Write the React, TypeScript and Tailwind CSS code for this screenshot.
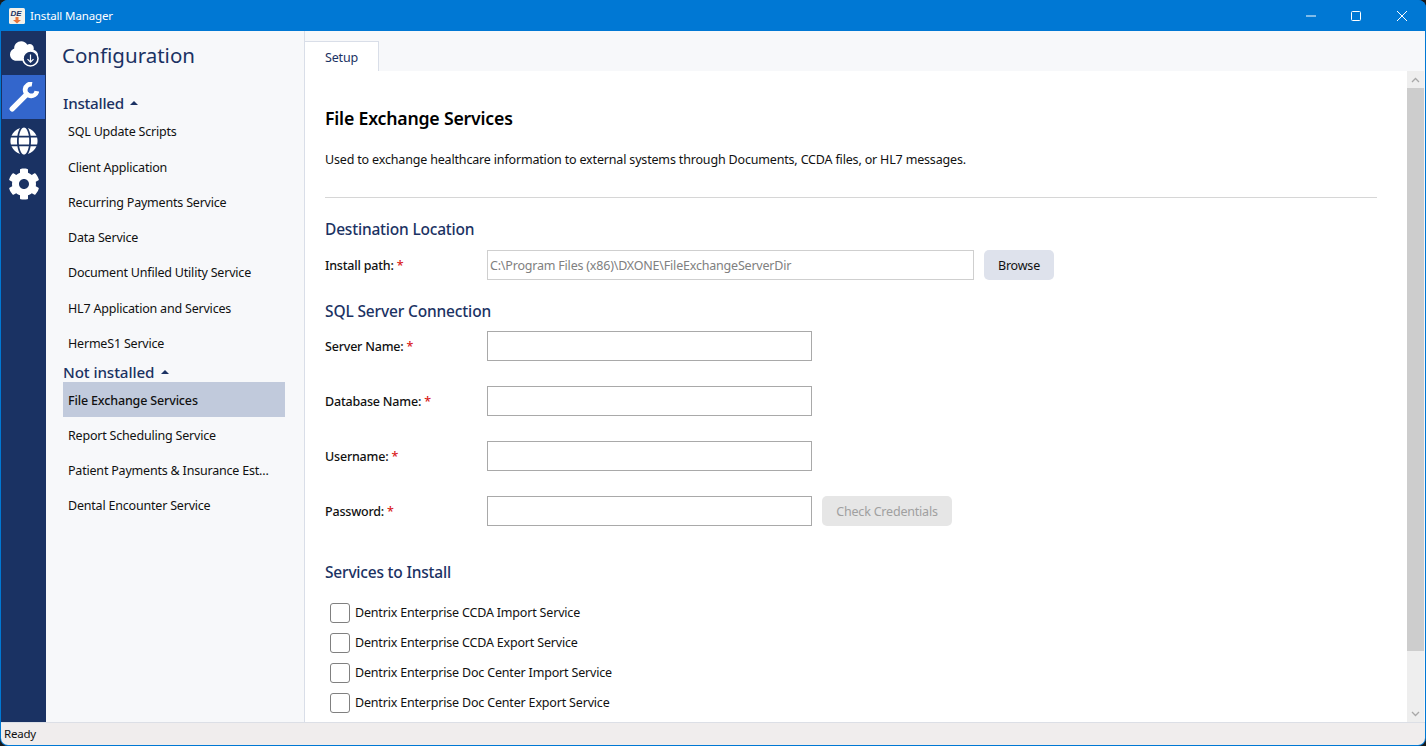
import React from "react";
import { FaGlobe, FaCog, FaCloud } from "react-icons/fa";

const font = "font-['Noto_Sans','Open_Sans',sans-serif]";

function NavItem({ label, active, h = "h-[35px]" }: { label: string; active?: boolean; h?: string }) {
  return (
    <div className={`${h} flex items-center pl-[5px] pt-[3px] text-[12.5px] tracking-[-0.2px] text-[#111] ${active ? "bg-[#c1cadc] font-medium tracking-[-0.15px]" : ""}`}>
      <span>{label}</span>
    </div>
  );
}

function Group({ label, wide }: { label: string; wide?: boolean }) {
  return (
    <div className={`h-[20px] flex items-center text-[15.2px] leading-none text-[#1b3263] font-medium ${wide ? "gap-[7px] tracking-[-0.1px]" : "gap-[6px] tracking-[-0.25px]"}`}>
      <span>{label}</span>
      <span className="w-0 h-0 border-x-[4px] border-x-transparent border-b-[4px] border-b-[#1b3263] mb-[3px]" />
    </div>
  );
}

function Field({ label, w = "w-[325px]", mb = "mb-[25px]", children }: { label: string; w?: string; mb?: string; children?: React.ReactNode }) {
  return (
    <div className={`flex items-center h-[30px] ${mb}`}>
      <div className="w-[162px] pt-[2px] text-[12.5px] tracking-[-0.2px] font-medium text-[#111]">
        {label} <span className="text-[#d92020]">*</span>
      </div>
      <div className={`${w} h-[30px] border border-[#a9a9a9] bg-white`} />
      {children}
    </div>
  );
}

function Check({ label }: { label: string }) {
  return (
    <div className="h-[30px] flex items-center pl-[5px] gap-[5px]">
      <div className="w-[20px] h-[20px] rounded-[3px] border border-[#808080] bg-white" />
      <span className="text-[12.5px] tracking-[-0.18px] text-[#111]">{label}</span>
    </div>
  );
}

export default function App() {
  return (
    <div className={`${font} w-[1426px] h-[746px] overflow-hidden bg-[#1a1a1a]`}>
      <div className="w-full h-full flex flex-col rounded-[8px] overflow-hidden bg-[#0078d4] pb-px px-px">
        <div className="h-[31px] -mx-px flex items-center bg-[#0078d4] text-white shrink-0">
          <svg width="16" height="16" viewBox="0 0 16 16" className="ml-[9px]">
            <rect width="16" height="16" rx="1.5" fill="#f4f1ea" />
            <text x="1.5" y="8" fontSize="8" fontWeight="800" fontStyle="italic" fill="#1b3263" fontFamily="Liberation Sans, sans-serif">DE</text>
            <path d="M6.5 9h3v3h2.5L8 15.5 4 12h2.5z" fill="#e8743b" />
          </svg>
          <span className="ml-[5px] text-[11.5px] tracking-[-0.12px]">Install Manager</span>
          <div className="ml-auto flex items-center">
            <svg width="46" height="30" viewBox="0 0 46 30"><path d="M18 15h10" stroke="#fff" strokeWidth="1" /></svg>
            <svg width="46" height="30" viewBox="0 0 46 30"><rect x="17.5" y="10.5" width="9" height="9" rx="1" fill="none" stroke="#fff" strokeWidth="1" /></svg>
            <svg width="46" height="30" viewBox="0 0 46 30"><path d="M17 10l10 10M27 10L17 20" stroke="#fff" strokeWidth="1" /></svg>
          </div>
        </div>
        <div className="flex-1 flex flex-col min-h-0 rounded-b-[7px] overflow-hidden">
          <div className="flex-1 flex min-h-0">
            <div className="w-[45px] bg-[#1a3263] shrink-0 flex flex-col items-center">
              <div className="h-[44px] w-full flex items-center justify-center relative">
                <FaCloud className="text-white text-[28px] -translate-y-[2px]" />
                <svg width="17" height="17" viewBox="0 0 17 17" className="absolute left-[21px] top-[19px]">
                  <circle cx="8.5" cy="8.5" r="7.5" fill="#1a3263" stroke="#fff" strokeWidth="1.6" />
                  <path d="M8.5 4.5v7.5M5.5 9.2l3 3 3-3" fill="none" stroke="#fff" strokeWidth="1.2" />
                </svg>
              </div>
              <div className="h-[44px] w-[43px] bg-[#3366cc] flex items-center justify-center">
                <svg width="30" height="30" viewBox="0 0 28 28" fill="none" stroke="#fff">
                  <path d="M3 25L16.5 11.5" strokeWidth="5" strokeLinecap="round" />
                  <path d="M21.5 2A5.5 5.5 0 1 0 26 8.5" strokeWidth="4.5" />
                </svg>
              </div>
              <div className="h-[44px] flex items-center justify-center">
                <FaGlobe className="text-white text-[28px]" />
              </div>
              <div className="h-[42px] flex items-center justify-center">
                <FaCog className="text-white text-[32px]" />
              </div>
            </div>
            <div className="w-[259px] shrink-0 bg-[#f7f8fa] border-r border-[#d9dee8] pl-[17px] pr-[19px]">
              <div className="h-[50px] -ml-px pt-[7px] text-[20.5px] leading-[34px] text-[#1b3263]">Configuration</div>
              <div className="mt-[13px]"><Group label="Installed" /></div>
              <div className="-mt-[1px]">
                <NavItem label="SQL Update Scripts" />
                <div className="h-[1px]" />
                <NavItem label="Client Application" />
                <NavItem label="Recurring Payments Service" />
                <NavItem label="Data Service" />
                <NavItem label="Document Unfiled Utility Service" h="h-[36px]" />
                <NavItem label="HL7 Application and Services" />
                <NavItem label="HermeS1 Service" />
              </div>
              <div className="mt-[3px] -mb-[1px]"><Group label="Not installed" wide /></div>
              <NavItem label="File Exchange Services" active />
              <NavItem label="Report Scheduling Service" />
              <NavItem label="Patient Payments & Insurance Est..." />
              <NavItem label="Dental Encounter Service" />
            </div>
            <div className="flex-1 min-w-0 flex flex-col bg-[#f7f8fa]">
              <div className="h-[40px] shrink-0 flex items-end">
                <div className="-ml-px w-[75px] h-[30px] bg-white border-t border-x border-[#d9dee8] flex items-center justify-center pt-[3px] text-[12.5px] tracking-[-0.2px] text-[#1b3263]">Setup</div>
              </div>
              <div className="flex-1 min-h-0 flex bg-white">
                <div className="flex-1 min-w-0 overflow-hidden pl-[20px] pr-[30px]">
                  <h1 className="mt-[34px] h-[26px] text-[17.7px] leading-[26px] tracking-[-0.2px] font-semibold text-black">File Exchange Services</h1>
                  <p className="mt-[19px] h-[20px] text-[12.5px] leading-[20px] tracking-[-0.17px] text-[#111]">Used to exchange healthcare information to external systems through Documents, CCDA files, or HL7 messages.</p>
                  <div className="mt-[27px] border-t border-[#d6d6d6]" />
                  <h2 className="mt-[20px] h-[22px] text-[15.5px] leading-[22px] tracking-[-0.2px] font-medium text-[#1b3263]">Destination Location</h2>
                  <div className="mt-[10px] flex items-center h-[30px]">
                    <div className="w-[162px] pt-[2px] text-[12.5px] tracking-[-0.2px] font-medium text-[#111]">Install path: <span className="text-[#d92020]">*</span></div>
                    <div className="w-[487px] h-[30px] border border-[#cfcfcf] flex items-center pl-[2px] pt-[2px] text-[12.5px] tracking-[-0.2px] text-[#808080]">C:\Program Files (x86)\DXONE\FileExchangeServerDir</div>
                    <div className="ml-[10px] w-[70px] h-[30px] rounded-[5px] bg-[#dee2ec] flex items-center justify-center pt-[2px] text-[12.5px] tracking-[-0.2px] text-[#111]">Browse</div>
                  </div>
                  <h2 className="mt-[20px] h-[22px] text-[15.5px] leading-[22px] tracking-[-0.15px] font-medium text-[#1b3263]">SQL Server Connection</h2>
                  <div className="mt-[9px]">
                    <Field label="Server Name:" />
                    <Field label="Database Name:" />
                    <Field label="Username:" />
                    <Field label="Password:" mb="mb-0">
                      <div className="ml-[10px] w-[130px] h-[30px] rounded-[5px] bg-[#e6e6e6] flex items-center justify-center pt-[2px] text-[12.5px] tracking-[-0.2px] text-[#a0a0a0]">Check Credentials</div>
                    </Field>
                  </div>
                  <h2 className="mt-[35px] h-[22px] text-[15.5px] leading-[22px] tracking-[-0.2px] font-medium text-[#1b3263]">Services to Install</h2>
                  <div className="mt-[15px]">
                    <Check label="Dentrix Enterprise CCDA Import Service" />
                    <Check label="Dentrix Enterprise CCDA Export Service" />
                    <Check label="Dentrix Enterprise Doc Center Import Service" />
                    <Check label="Dentrix Enterprise Doc Center Export Service" />
                  </div>
                </div>
                <div className="w-[17px] shrink-0 bg-[#eeeeee] flex flex-col">
                  <div className="h-[17px] flex items-center justify-center">
                    <svg width="9" height="6" viewBox="0 0 9 6"><path d="M1 5l3.5-3.5L8 5" fill="none" stroke="#a8a8a8" strokeWidth="1.3" /></svg>
                  </div>
                  <div className="h-[563px] bg-[#cdcdcd]" />
                  <div className="flex-1 flex items-end justify-center pb-[5px]">
                    <svg width="9" height="6" viewBox="0 0 9 6"><path d="M1 1l3.5 3.5L8 1" fill="none" stroke="#a8a8a8" strokeWidth="1.3" /></svg>
                  </div>
                </div>
                <div className="w-px shrink-0 bg-[#f7f8fa]" />
              </div>
            </div>
          </div>
          <div className="h-[23px] shrink-0 bg-[#f0eded] border-t border-[#dcdfe6] flex items-center pl-[3px] text-[11.5px] tracking-[-0.2px] text-[#111]">Ready</div>
        </div>
      </div>
    </div>
  );
}
